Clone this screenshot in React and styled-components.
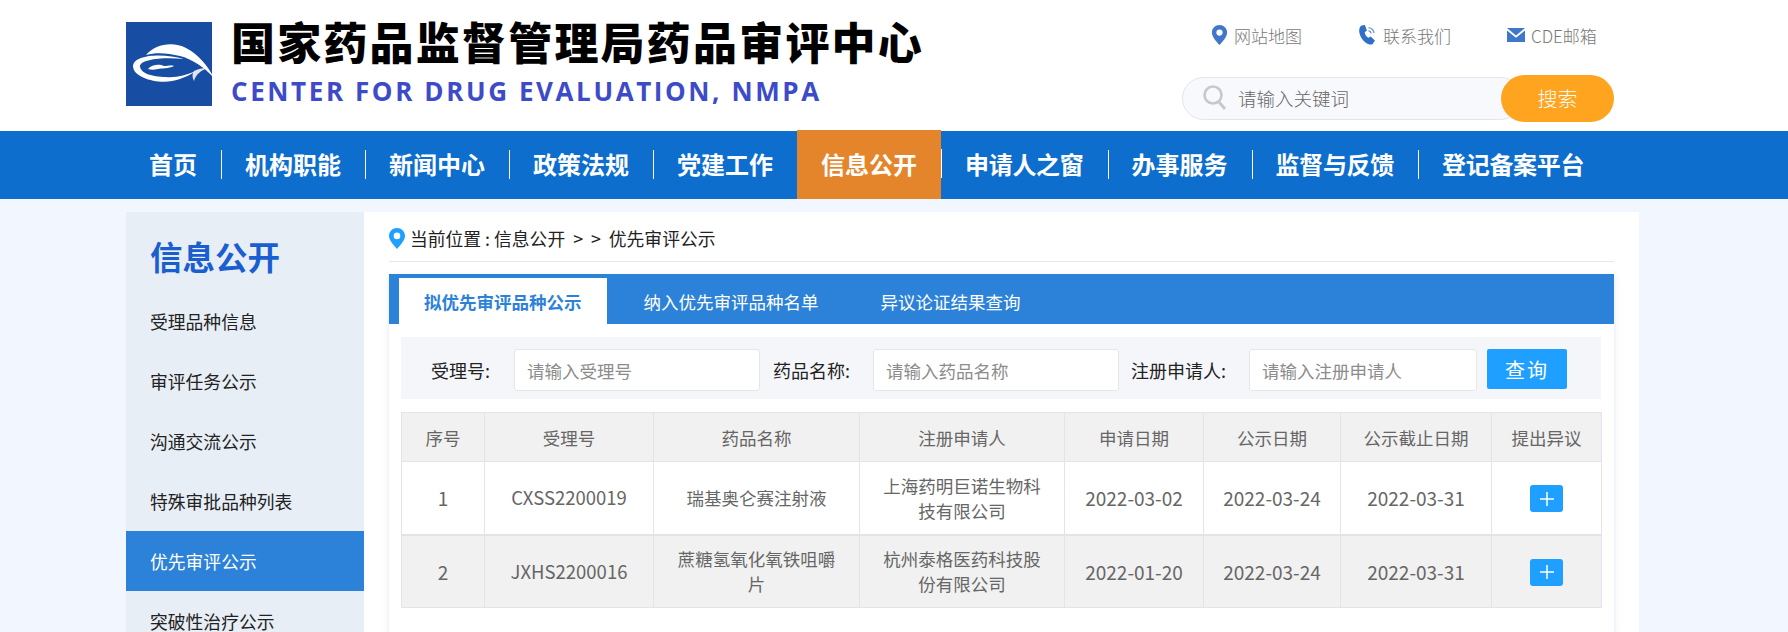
import React from "react";
import styled, { createGlobalStyle } from "styled-components";

const GlobalStyle = createGlobalStyle`
    html, body {
        margin: 0;
        padding: 0;
        height: 100%;
        overflow: hidden;
        background: #f2f7ff;
    }
    body {
        font-family: "Noto Sans CJK SC", "Noto Sans", sans-serif;
        color: #333;
    }
    * {
        box-sizing: border-box;
    }
`;

const Page = styled.div`
    width: 1788px;
    height: 632px;
    overflow: hidden;
`;

const Header = styled.header`
    height: 131px;
    background: #fff;
    padding: 22px 174px 0 126px;
    display: flex;
    justify-content: space-between;
`;

const Brand = styled.div`
    display: flex;
    gap: 17px;
`;

const BrandText = styled.div`
    display: flex;
    flex-direction: column;
`;

const BrandTitle = styled.div`
    margin-top: -4px;
    font-size: 44px;
    line-height: 46px;
    font-weight: 900;
    letter-spacing: 2.2px;
    color: #000;
`;

const BrandSub = styled.div`
    margin-top: 13px;
    font-family: "Open Sans", sans-serif;
    font-size: 26px;
    line-height: 28px;
    font-weight: 700;
    letter-spacing: 2.6px;
    color: #3d4bc8;
`;

const HeaderRight = styled.div`
    width: 432px;
    display: flex;
    flex-direction: column;
`;

const TopLinks = styled.div`
    display: flex;
    padding: 3px 0 0 29px;
    gap: 56px;
`;

const TopLink = styled.a`
    display: flex;
    align-items: center;
    gap: 6px;
    height: 20px;
    font-size: 17px;
    font-weight: 300;
    color: #777;
`;

const SearchBar = styled.div`
    margin-top: 30px;
    height: 47px;
    position: relative;
    display: flex;
    align-items: center;
`;

const SearchField = styled.div`
    width: 340px;
    height: 43px;
    padding: 0 0 2px 20px;
    display: flex;
    align-items: center;
    gap: 10px;
    background: #f8f9fc;
    border: 1px solid #e4e5ea;
    border-radius: 22px;
    font-size: 18.5px;
    font-weight: 300;
    color: #666;
`;

const SearchButton = styled.button`
    position: absolute;
    right: 0;
    top: 0;
    width: 113px;
    height: 47px;
    border: none;
    border-radius: 24px;
    background: #ffa41f;
    color: #fff;
    font-family: inherit;
    font-size: 20px;
    font-weight: 300;
`;

const Nav = styled.nav`
    height: 68px;
    background: #0d6ecd;
    padding-left: 125px;
    display: flex;
`;

const NavItem = styled.a`
    position: relative;
    height: ${props => (props.$active ? "69px" : "68px")};
    margin-top: ${props => (props.$active ? "-1px" : "0")};
    padding: 0 24px 3px;
    display: flex;
    align-items: center;
    font-size: 24px;
    font-weight: 700;
    letter-spacing: ${props => (props.$long ? "-0.3px" : "0")};
    color: #fff;
    background: ${props => (props.$active ? "#e5852b" : "transparent")};

    &::after {
        content: "";
        position: absolute;
        right: -1px;
        top: 19px;
        width: 1px;
        height: 29px;
        background: #fff;
    }
    &:last-child::after {
        display: none;
    }
`;

const Body = styled.div`
    padding: 13px 148px 0 126px;
    display: flex;
`;

const Sidebar = styled.aside`
    width: 238px;
    height: 420px;
    background: #e8eef6;
`;

const SideTitle = styled.div`
    height: 79px;
    padding: 21px 0 0 24px;
    font-size: 32.5px;
    line-height: 46px;
    font-weight: 700;
    color: #1a5fd0;
`;

const SideItem = styled.a`
    display: flex;
    align-items: center;
    height: 60px;
    padding-left: 24px;
    font-size: 17.8px;
    color: ${props => (props.$active ? "#fff" : "#222")};
    background: ${props => (props.$active ? "#2c82d8" : "transparent")};
`;

const Main = styled.main`
    width: 1275px;
    height: 420px;
    background: #fff;
    padding: 0 25px;
`;

const Crumb = styled.div`
    height: 50px;
    padding-top: 3px;
    display: flex;
    align-items: center;
    gap: 5px;
    border-bottom: 1px solid #e6e6e6;
    font-size: 17.8px;
    color: #222;
    white-space: pre;
`;

const TabPanel = styled.section`
    margin-top: 12px;
    box-shadow: 0 2px 6px rgba(120, 150, 190, 0.25);
    height: 360px;
`;

const Tabs = styled.div`
    height: 50px;
    padding: 4px 0 0 10px;
    background: #2c82d8;
    display: flex;
`;

const Tab = styled.a`
    display: flex;
    align-items: center;
    padding: 0 ${props => (props.$active ? "25px" : "31px")};
    margin-right: ${props => (props.$active ? "6px" : "0")};
    font-size: 17.5px;
    font-weight: ${props => (props.$active ? 700 : 400)};
    color: ${props => (props.$active ? "#2c82d8" : "#fff")};
    background: ${props => (props.$active ? "#fff" : "transparent")};
`;

const PanelBody = styled.div`
    padding: 13px 13px 0 12px;
`;

const Filter = styled.form`
    height: 62px;
    background: #f4f6fa;
    padding: 12px 0 0 30px;
    display: flex;
    align-items: flex-start;
`;

const FilterLabel = styled.label`
    height: 42px;
    display: flex;
    align-items: center;
    margin-right: ${props => props.$gap}px;
    font-size: 18px;
    color: #222;
    white-space: nowrap;
`;

const FilterInput = styled.input`
    width: ${props => props.$w}px;
    height: 42px;
    margin-right: ${props => props.$gap}px;
    padding: 0 12px;
    border: 1px solid #e4e6ea;
    border-radius: 3px;
    background: #fff;
    font-family: inherit;
    font-size: 17.5px;
    outline: none;

    &::placeholder {
        color: #8c8c8c;
    }
`;

const QueryButton = styled.button`
    width: 80px;
    height: 40px;
    border: none;
    border-radius: 2px;
    background: #1f9fff;
    color: #fff;
    font-family: inherit;
    font-size: 20px;
    letter-spacing: 2px;
`;

const Table = styled.table`
    width: 1200px;
    margin-top: 13px;
    border-collapse: collapse;
    table-layout: fixed;
`;

const HeadCell = styled.th`
    height: 49px;
    padding: 0;
    border: 1px solid #e4e4e4;
    background: #f1f1f1;
    font-size: 17.5px;
    font-weight: 400;
    color: #666;
`;

const Row = styled.tr`
    background: ${props => (props.$alt ? "#f1f1f1" : "#fff")};
    border-top: ${props => (props.$alt ? "2px solid #e4e4e4" : "none")};
`;

const Cell = styled.td`
    height: 73px;
    padding: 0 ${props => (props.$size > 18 ? 0 : 20)}px;
    border: 1px solid #e4e4e4;
    font-size: ${props => props.$size || 17.5}px;
    line-height: 25px;
    color: #666;
    text-align: center;
    white-space: ${props => (props.$size > 18 ? "nowrap" : "normal")};
`;

const PlusButton = styled.button`
    width: 33px;
    height: 27px;
    padding: 0;
    border: none;
    border-radius: 3px;
    background: #1f9fff;
    color: #fff;
    display: inline-flex;
    align-items: center;
    justify-content: center;
    vertical-align: middle;
`;

const columns = [
    { title: "序号", w: 83 },
    { title: "受理号", w: 169 },
    { title: "药品名称", w: 206 },
    { title: "注册申请人", w: 205 },
    { title: "申请日期", w: 139 },
    { title: "公示日期", w: 137 },
    { title: "公示截止日期", w: 151 },
    { title: "提出异议", w: 110 },
];

const rows = [
    ["1", "CXSS2200019", "瑞基奥仑赛注射液", "上海药明巨诺生物科技有限公司", "2022-03-02", "2022-03-24", "2022-03-31"],
    ["2", "JXHS2200016", "蔗糖氢氧化氧铁咀嚼片", "杭州泰格医药科技股份有限公司", "2022-01-20", "2022-03-24", "2022-03-31"],
];

// cell text size per column, the latin ones run a bit bigger
const cellSizes = [19, 18.5, 17.5, 17.5, 19, 19, 19];

const navItems = ["首页", "机构职能", "新闻中心", "政策法规", "党建工作", "信息公开", "申请人之窗", "办事服务", "监督与反馈", "登记备案平台"];
const sideItems = ["受理品种信息", "审评任务公示", "沟通交流公示", "特殊审批品种列表", "优先审评公示", "突破性治疗公示"];

function Logo() {
    return (
        <svg width="88" height="84" viewBox="0 0 88 84">
            <defs>
                <filter id="soft" x="-10%" y="-10%" width="120%" height="120%">
                    <feGaussianBlur stdDeviation="0.7" />
                </filter>
            </defs>
            <rect width="86" height="84" fill="#174ea3" />
            <g fill="#fff" filter="url(#soft)">
                <path d="M20 33C29 22 47 19 60 26C72 32 82 44 88 56C78 45 66 37 54 34C42 31 30 30 20 33Z" />
                <path d="M58 37C38 31 8 32 7 44C7 56 32 62 46 59C56 57 64 53 70 49C60 53 50 56 40 55C26 55 14 51 14 44C15 37 38 35 58 37Z" />
                <path d="M68 49C72 47 76 46 81 46C75 49 70 52 68 59C66 55 66 52 68 49Z" opacity="0.85" />
                <path d="M22 47C26 42 34 42 38 44C42 44 45 43 48 44C42 47 36 46 32 47C28 48 25 48 22 47Z" />
            </g>
        </svg>
    );
}

function PinIcon({ color, w, h }) {
    return (
        <svg width={w} height={h} viewBox="0 0 16 21">
            <path fillRule="evenodd" fill={color} d="M8 0C3.6 0 0 3.4 0 7.8 0 12.8 5.4 18 8 21c2.6-3 8-8.2 8-13.2C16 3.4 12.4 0 8 0zm0 4.6a3.3 3.3 0 1 1 0 6.6 3.3 3.3 0 0 1 0-6.6z" />
        </svg>
    );
}

function PhoneIcon() {
    return (
        <svg width="19" height="20" viewBox="0 0 18 20">
            <path fill="#2f6fc6" d="M3 0.5L6.4 0 8.4 5.6 6.2 7.2C6.6 9.6 7.8 11.4 9.8 12.8L12.2 11.6 16.4 15.6 14 19.2C10.4 20.6 6 17.6 3 13 0.2 8.6-0.4 3.2 3 0.5z" />
            <path fill="none" stroke="#6f9bd8" strokeWidth="1.4" d="M10 2.6c3 0.4 5 2.4 5.6 5.4M10 5.8c1.4 0.2 2.4 1.2 2.7 2.6" />
        </svg>
    );
}

function MailIcon() {
    return (
        <svg width="18" height="14" viewBox="0 0 18 14">
            <path fill="#3f78c9" d="M0 0H18L9 7.4 0 0z" />
            <path fill="#3f78c9" d="M0 2.4L9 9.8 18 2.4V14H0z" />
        </svg>
    );
}

function SearchIcon() {
    return (
        <svg width="25" height="25" viewBox="0 0 25 25">
            <circle cx="10" cy="10" r="8.5" fill="none" stroke="#c8c8c8" strokeWidth="2.6" />
            <path d="M16 17l6 7" stroke="#c8c8c8" strokeWidth="2.8" />
        </svg>
    );
}

function PlusIcon() {
    return (
        <svg width="14" height="14" viewBox="0 0 14 14">
            <path d="M7 0V14M0 7H14" stroke="#fff" strokeWidth="1.5" />
        </svg>
    );
}

export default function App() {
    return (
        <Page>
            <GlobalStyle />
            <Header>
                <Brand>
                    <Logo />
                    <BrandText>
                        <BrandTitle>国家药品监督管理局药品审评中心</BrandTitle>
                        <BrandSub>CENTER FOR DRUG EVALUATION, NMPA</BrandSub>
                    </BrandText>
                </Brand>
                <HeaderRight>
                    <TopLinks>
                        <TopLink><PinIcon color="#3f78c9" w={17} h={20} />网站地图</TopLink>
                        <TopLink><PhoneIcon />联系我们</TopLink>
                        <TopLink><MailIcon />CDE邮箱</TopLink>
                    </TopLinks>
                    <SearchBar>
                        <SearchField><SearchIcon />请输入关键词</SearchField>
                        <SearchButton>搜索</SearchButton>
                    </SearchBar>
                </HeaderRight>
            </Header>
            <Nav>
                {navItems.map(item => (
                    <NavItem key={item} $active={item === "信息公开"} $long={item.length > 4}>{item}</NavItem>
                ))}
            </Nav>
            <Body>
                <Sidebar>
                    <SideTitle>信息公开</SideTitle>
                    {sideItems.map(item => (
                        <SideItem key={item} $active={item === "优先审评公示"}>{item}</SideItem>
                    ))}
                </Sidebar>
                <Main>
                    <Crumb>
                        <PinIcon color="#1f9fff" w={16} h={21} />
                        当前位置 : 信息公开  &gt;  &gt;  优先审评公示
                    </Crumb>
                    <TabPanel>
                        <Tabs>
                            <Tab $active>拟优先审评品种公示</Tab>
                            <Tab>纳入优先审评品种名单</Tab>
                            <Tab>异议论证结果查询</Tab>
                        </Tabs>
                        <PanelBody>
                            <Filter>
                                <FilterLabel $gap={24}>受理号:</FilterLabel>
                                <FilterInput $w={246} $gap={13} placeholder="请输入受理号" />
                                <FilterLabel $gap={23}>药品名称:</FilterLabel>
                                <FilterInput $w={246} $gap={12} placeholder="请输入药品名称" />
                                <FilterLabel $gap={23}>注册申请人:</FilterLabel>
                                <FilterInput $w={228} $gap={10} placeholder="请输入注册申请人" />
                                <QueryButton type="button">查询</QueryButton>
                            </Filter>
                            <Table>
                                <colgroup>
                                    {columns.map(c => <col key={c.title} width={c.w} />)}
                                </colgroup>
                                <thead>
                                    <tr>
                                        {columns.map(c => <HeadCell key={c.title}>{c.title}</HeadCell>)}
                                    </tr>
                                </thead>
                                <tbody>
                                    {rows.map((row, i) => (
                                        <Row key={row[0]} $alt={i % 2 === 1}>
                                            {row.map((v, j) => <Cell key={j} $size={cellSizes[j]}>{v}</Cell>)}
                                            <Cell><PlusButton type="button"><PlusIcon /></PlusButton></Cell>
                                        </Row>
                                    ))}
                                </tbody>
                            </Table>
                        </PanelBody>
                    </TabPanel>
                </Main>
            </Body>
        </Page>
    );
}
